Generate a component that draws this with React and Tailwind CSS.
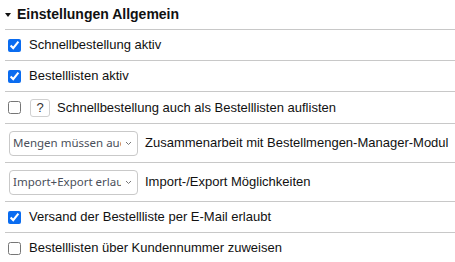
import React from 'react'

const font = {fontFamily: '"Liberation Sans", Arial, sans-serif'}

function Check({checked}){
  return <input type="checkbox" defaultChecked={checked} className="m-0 h-[13px] w-[13px] shrink-0 accent-[#0a6cf0]" />
}

function Select({text}){
  return (
    <div className="flex h-[25px] w-[129px] shrink-0 items-center justify-between rounded-[4px] border border-[#c9c9c9] bg-white pl-[3px] pr-[5px]">
      <span className="overflow-hidden whitespace-nowrap text-[11.5px] text-[#4a4f5a] [font-family:'Noto_Sans',sans-serif]">{text}</span>
      <svg width="7" height="5" viewBox="0 0 7 5" className="ml-[4px] shrink-0"><path d="M1 1l2.5 2.5 2.5-2.5" fill="none" stroke="#777" strokeWidth="1"/></svg>
    </div>
  )
}

export default function App(){
  return (
    <div className="w-[455px] h-[262px] overflow-hidden bg-white pl-[5px] text-[13px] text-[#111]" style={font}>
      <div className="flex h-[29px] items-center gap-[6px]">
        <svg width="6" height="4" viewBox="0 0 6 4"><path d="M0 0h6L3 4z" fill="#111"/></svg>
        <span className="text-[14px] font-bold">Einstellungen Allgemein</span>
      </div>

      <div className="flex h-[31px] items-center gap-[8px] border-t border-[#c8c8c8] pl-[3px]">
        <Check checked />
        <span>Schnellbestellung aktiv</span>
      </div>
      <div className="flex h-[31px] items-center gap-[8px] border-t border-[#c8c8c8] pl-[3px]">
        <Check checked />
        <span>Bestelllisten aktiv</span>
      </div>
      <div className="flex h-[32px] items-center border-t border-[#c8c8c8] pl-[3px]">
        <Check />
        <div className="ml-[9px] flex h-[18px] w-[20px] items-center justify-center rounded-[3px] border border-[#d0d0d0] text-[13px] text-[#333]">?</div>
        <span className="ml-[7px]">Schnellbestellung auch als Bestelllisten auflisten</span>
      </div>
      <div className="flex h-[39px] items-center gap-[7px] border-t border-[#c8c8c8] pl-[4px]">
        <Select text="Mengen müssen auch" />
        <span>Zusammenarbeit mit Bestellmengen-Manager-Modul</span>
      </div>
      <div className="flex h-[39px] items-center gap-[7px] border-t border-[#c8c8c8] pl-[4px]">
        <Select text="Import+Export erlaubt" />
        <span>Import-/Export Möglichkeiten</span>
      </div>
      <div className="flex h-[31px] items-center gap-[8px] border-t border-[#c8c8c8] pl-[3px]">
        <Check checked />
        <span>Versand der Bestellliste per E-Mail erlaubt</span>
      </div>
      <div className="flex h-[31px] items-center gap-[8px] border-t border-[#c8c8c8] pl-[3px]">
        <Check />
        <span>Bestelllisten über Kundennummer zuweisen</span>
      </div>
    </div>
  )
}
